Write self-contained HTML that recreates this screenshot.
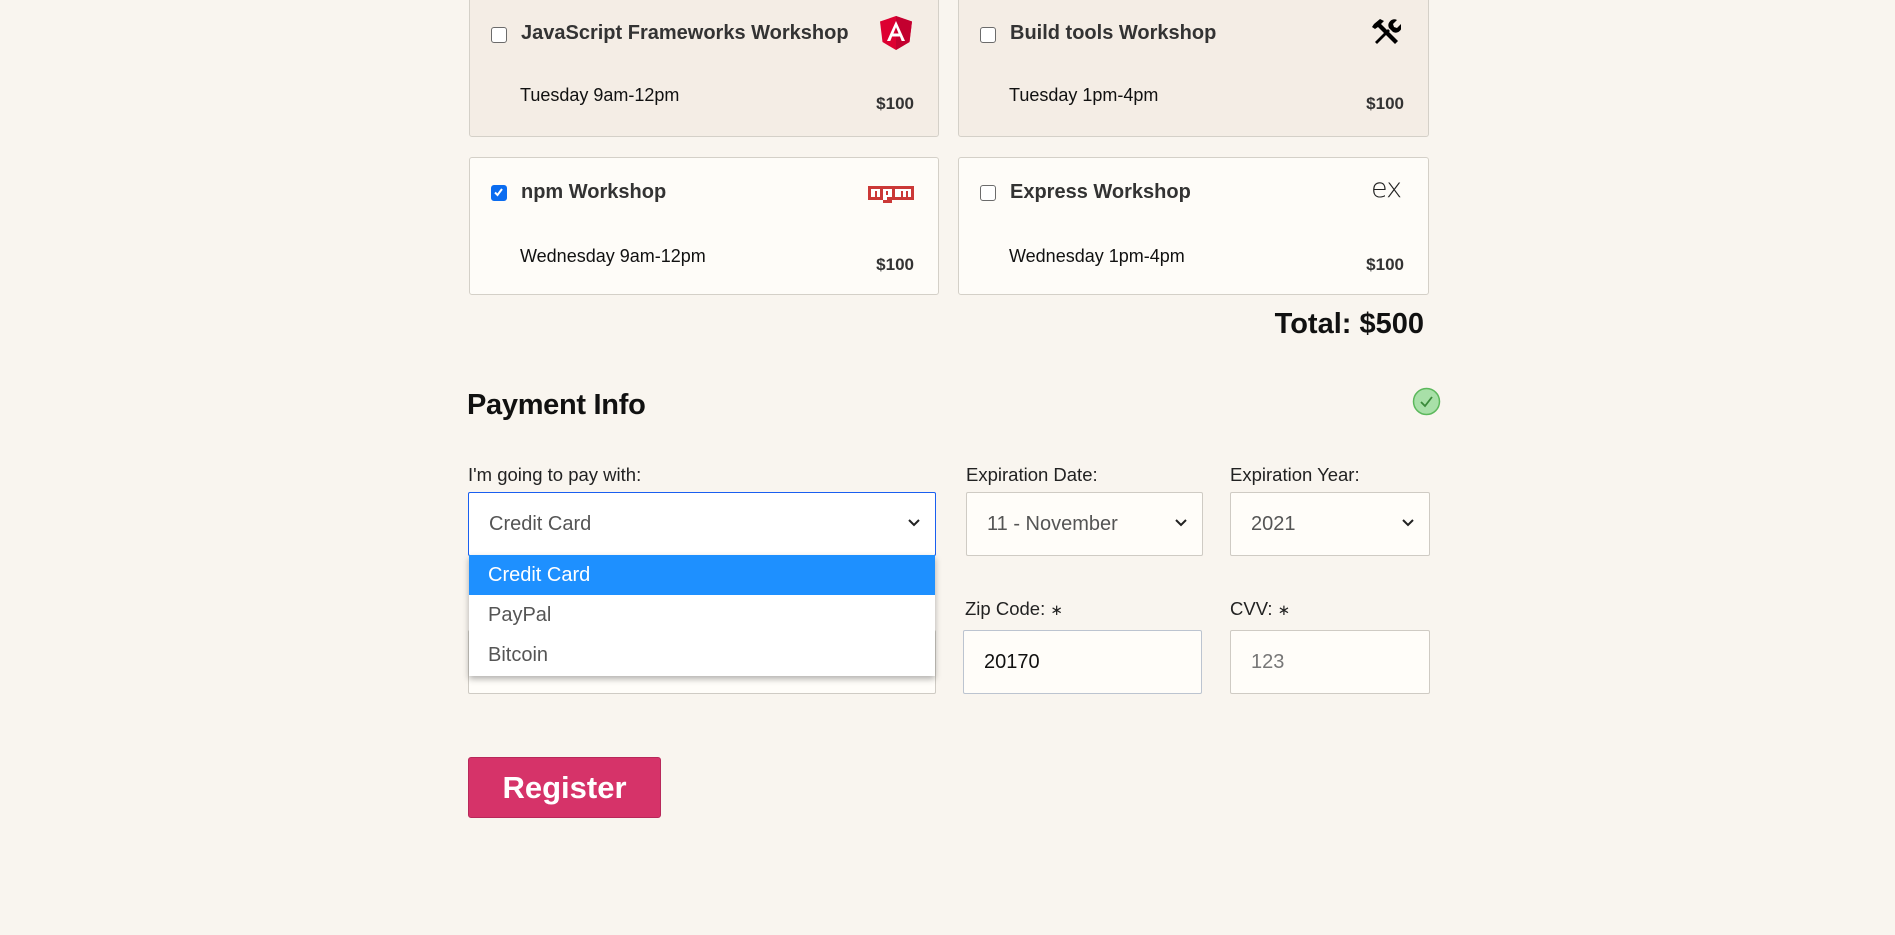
<!DOCTYPE html>
<html><head><meta charset="utf-8"><style>
*{box-sizing:border-box;margin:0;padding:0}
body{width:1895px;height:935px;background:#f9f5ef;font-family:"Liberation Sans",Arial,sans-serif;position:relative;overflow:hidden;color:#222}
.card{position:absolute;border:1px solid #d4d0c8;border-radius:3px}
.r1{background:#f4ede5;top:-4px;height:141px}
.r2{background:#fefcf8;top:157px;height:138px}
.cb{position:absolute;left:21px;width:16px;height:16px;border:1.5px solid #6b6b6b;border-radius:3px;background:#fff}
.cb.on{background:#0b6cf0;border-color:#0b6cf0}
.t{position:absolute;left:51px;font-weight:bold;font-size:20px;color:#333}
.time{position:absolute;left:50px;font-size:18px;color:#111}
.price{position:absolute;right:24px;font-weight:bold;font-size:17px;color:#333}
.ic{position:absolute}
.lbl{position:absolute;font-size:18.5px;color:#222}
.box{position:absolute;border:1px solid #cfcbc4;background:#fffdf9;border-radius:2px;font-size:20px;color:#555;padding-left:20px;display:flex;align-items:center}
.chev{position:absolute;right:14px;top:50%;margin-top:-6px}
</style></head><body>

<div class="card r1" style="left:469px;width:470px">
 <div class="cb" style="top:30px"></div>
 <div class="t" style="top:25px">JavaScript Frameworks Workshop</div>
 <svg class="ic" style="left:410px;top:19px" width="32" height="34" viewBox="0 0 32 34"><path d="M16 0L0 5.5l2.5 20.5L16 34l13.5-8L32 5.5z" fill="#dd0031"/><path d="M16 0v34l13.5-8L32 5.5z" fill="#c3002f"/><path d="M16 5L7 25h3.3l1.8-4.5h7.8L21.7 25H25zm-2.6 12.5L16 11.3l2.6 6.2z" fill="#fff"/></svg>
 <div class="time" style="top:88px">Tuesday 9am-12pm</div>
 <div class="price" style="top:97px">$100</div>
</div>
<div class="card r1" style="left:958px;width:471px">
 <div class="cb" style="top:30px"></div>
 <div class="t" style="top:25px">Build tools Workshop</div>
 <svg class="ic" style="left:412px;top:21px" width="30" height="28" viewBox="0 0 30 28"><path d="M3 6l6-5 4 2-3 3 17 17-3 3L7 9 4 11 1 9z" fill="#000"/><path d="M4 24L17 11l2 2L6 26z" fill="#000"/><path d="M18 10a6 6 0 0 1 8-8l-4 4 1 3 3 1 4-4a6 6 0 0 1-8 8z" fill="#000"/></svg>
 <div class="time" style="top:88px">Tuesday 1pm-4pm</div>
 <div class="price" style="top:97px">$100</div>
</div>
<div class="card r2" style="left:469px;width:470px">
 <div class="cb on" style="top:27px"><svg width="13" height="13" viewBox="0 0 13 13" style="position:absolute;left:0;top:0"><path d="M3 6.5l2.5 2.5 4.5-6" stroke="#fff" stroke-width="2" fill="none"/></svg></div>
 <div class="t" style="top:23px">npm Workshop</div>
 <svg class="ic" style="left:398px;top:28px" width="46" height="18" viewBox="0 0 46 18"><path d="M0 0h46v14H24v3h-9v-3H0z" fill="#cb3837"/><path d="M3 3h9v8H9V5H7v6H3zM15 3h9v8h-5v3h-4zm3 2v4h2V5zM27 3h16v8h-3V5h-2v6h-3V5h-2v6h-6z" fill="#fff"/></svg>
 <div class="time" style="top:88px">Wednesday 9am-12pm</div>
 <div class="price" style="top:97px">$100</div>
</div>
<div class="card r2" style="left:958px;width:471px">
 <div class="cb" style="top:27px"></div>
 <div class="t" style="top:23px">Express Workshop</div>
 <div class="ic" style="left:412px;top:15px;font-size:27px;font-family:'DejaVu Sans',sans-serif;font-weight:200;color:#222;letter-spacing:-1px">ex</div>
 <div class="time" style="top:88px">Wednesday 1pm-4pm</div>
 <div class="price" style="top:97px">$100</div>
</div>

<div style="position:absolute;right:471px;top:308px;font-size:29px;font-weight:bold;color:#111">Total: $500</div>

<div style="position:absolute;left:467px;top:389px;font-size:29px;font-weight:bold;color:#111;letter-spacing:-0.3px">Payment Info</div>
<svg style="position:absolute;left:1412px;top:387px" width="29" height="29" viewBox="0 0 29 29"><circle cx="14.5" cy="14.5" r="13" fill="#a8e0a8" stroke="#5cb85c" stroke-width="1.5"/><path d="M9 15l4 4 7-9" stroke="#3a8a3a" stroke-width="1.8" fill="none"/></svg>

<div class="lbl" style="left:468px;top:464px">I'm going to pay with:</div>
<div class="lbl" style="left:966px;top:464px">Expiration Date:</div>
<div class="lbl" style="left:1230px;top:464px">Expiration Year:</div>

<div class="box" style="left:468px;top:492px;width:468px;height:64px;border-color:#1a5ff0;background:#fff">Credit Card<svg class="chev" width="14" height="10" viewBox="0 0 14 10"><path d="M2 2l5 5 5-5" stroke="#222" stroke-width="2" fill="none"/></svg></div>
<div class="box" style="left:966px;top:492px;width:237px;height:64px">11 - November<svg class="chev" width="14" height="10" viewBox="0 0 14 10"><path d="M2 2l5 5 5-5" stroke="#222" stroke-width="2" fill="none"/></svg></div>
<div class="box" style="left:1230px;top:492px;width:200px;height:64px">2021<svg class="chev" width="14" height="10" viewBox="0 0 14 10"><path d="M2 2l5 5 5-5" stroke="#222" stroke-width="2" fill="none"/></svg></div>

<div class="lbl" style="left:965px;top:598px">Zip Code: <span style="font-size:15px">∗</span></div>
<div class="lbl" style="left:1230px;top:598px">CVV: <span style="font-size:15px">∗</span></div>

<div class="box" style="left:468px;top:630px;width:468px;height:64px"></div>
<div class="box" style="left:963px;top:630px;width:239px;height:64px;color:#111;border-color:#bcc4d0">20170</div>
<div class="box" style="left:1230px;top:630px;width:200px;height:64px;color:#777">123</div>

<div style="position:absolute;left:469px;top:555px;width:466px;height:121px;background:#fff;box-shadow:0 3px 6px rgba(0,0,0,.3);font-size:20px">
 <div style="height:40px;background:#1e90ff;color:#fff;padding-left:19px;line-height:40px">Credit Card</div>
 <div style="height:40px;color:#555;padding-left:19px;line-height:40px">PayPal</div>
 <div style="height:40px;color:#555;padding-left:19px;line-height:40px">Bitcoin</div>
</div>

<div style="position:absolute;left:468px;top:757px;width:193px;height:61px;background:#d63369;border-radius:3px;border:1px solid #b8285a;color:#fff;font-weight:bold;font-size:31px;text-align:center;line-height:59px">Register</div>
</body></html>
